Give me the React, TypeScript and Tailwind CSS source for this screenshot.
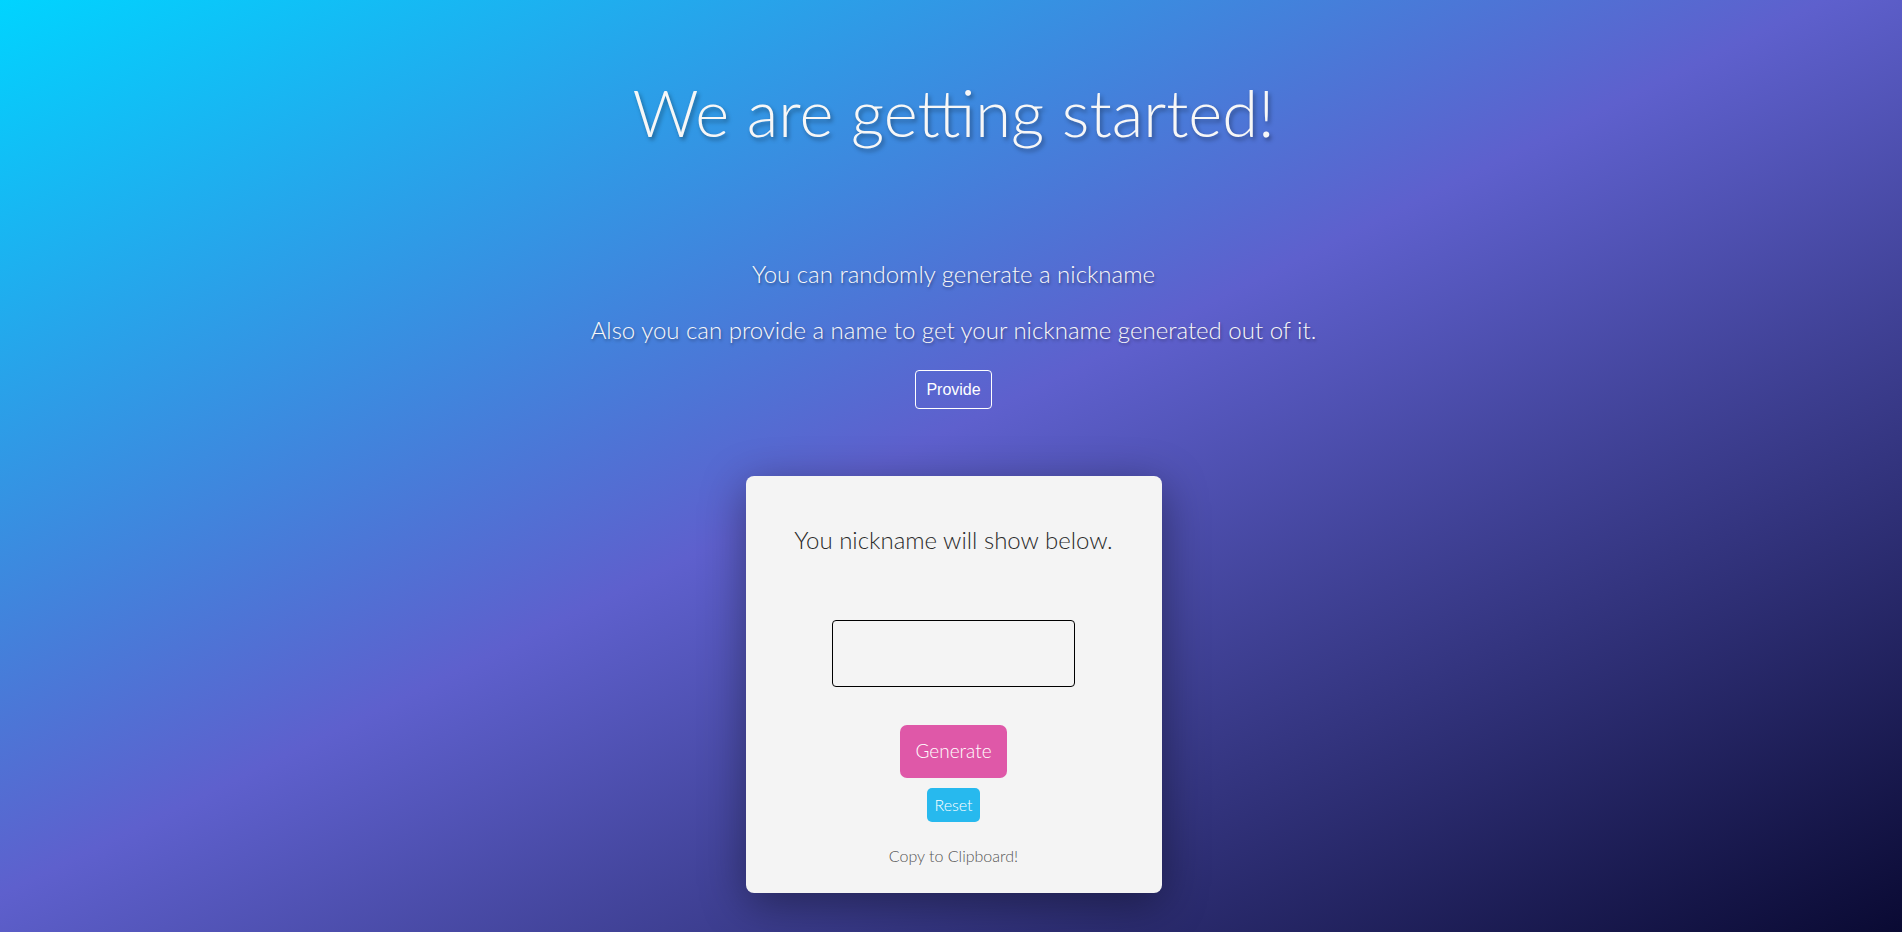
import React from "react";

export default function App() {
  const font = { fontFamily: "Lato, 'Noto Sans', sans-serif" };
  return (
    <div
      className="min-h-[932px] w-full flex flex-col items-center pl-[5px] bg-[linear-gradient(to_bottom_right,#00d4ff_0%,#5e60cd_48%,#0a0a33_100%)]"
      style={font}
    >
      <h1 className="mt-[72px] text-[65px] leading-[80px] font-light text-[#f7f7f7] [text-shadow:2px_3px_4px_rgba(0,0,0,0.35)]">
        We are getting started!
      </h1>
      <p className="mt-[107px] text-[24px] leading-[30px] font-light text-[#f8f8f8] [text-shadow:1px_2px_3px_rgba(0,0,0,0.35)]">
        You can randomly generate a nickname
      </p>
      <p className="mt-[26px] text-[24px] leading-[30px] font-light text-[#f8f8f8] [text-shadow:1px_2px_3px_rgba(0,0,0,0.35)]">
        Also you can provide a name to get your nickname generated out of it.
      </p>
      <button
        className="mt-[25px] h-[39px] px-[10px] border border-white rounded-[4px] text-white text-[16px] leading-[18px]"
        style={{ fontFamily: "'Liberation Sans', Arial, sans-serif" }}
      >
        Provide
      </button>
      <div className="mt-[67px] w-[416px] h-[417px] bg-[#f4f4f4] rounded-[8px] shadow-[0_10px_45px_rgba(0,0,0,0.4)] flex flex-col items-center pt-[49px]">
        <p className="text-[24px] leading-[30px] font-light text-[#2a2a2a]">
          You nickname will show below.
        </p>
        <div className="mt-[65px] w-[243px] h-[67px] border border-black rounded-[4px]" />
        <button className="mt-[38px] h-[53px] px-[15px] rounded-[7px] bg-[#df58a8] text-white text-[19px] font-light">
          Generate
        </button>
        <button className="mt-[10px] h-[34px] px-[7px] rounded-[5px] bg-[#27b9ee] text-white text-[16px] font-light">
          Reset
        </button>
        <p className="mt-[24px] text-[16px] leading-[20px] font-light text-[#555]">
          Copy to Clipboard!
        </p>
      </div>
    </div>
  );
}
